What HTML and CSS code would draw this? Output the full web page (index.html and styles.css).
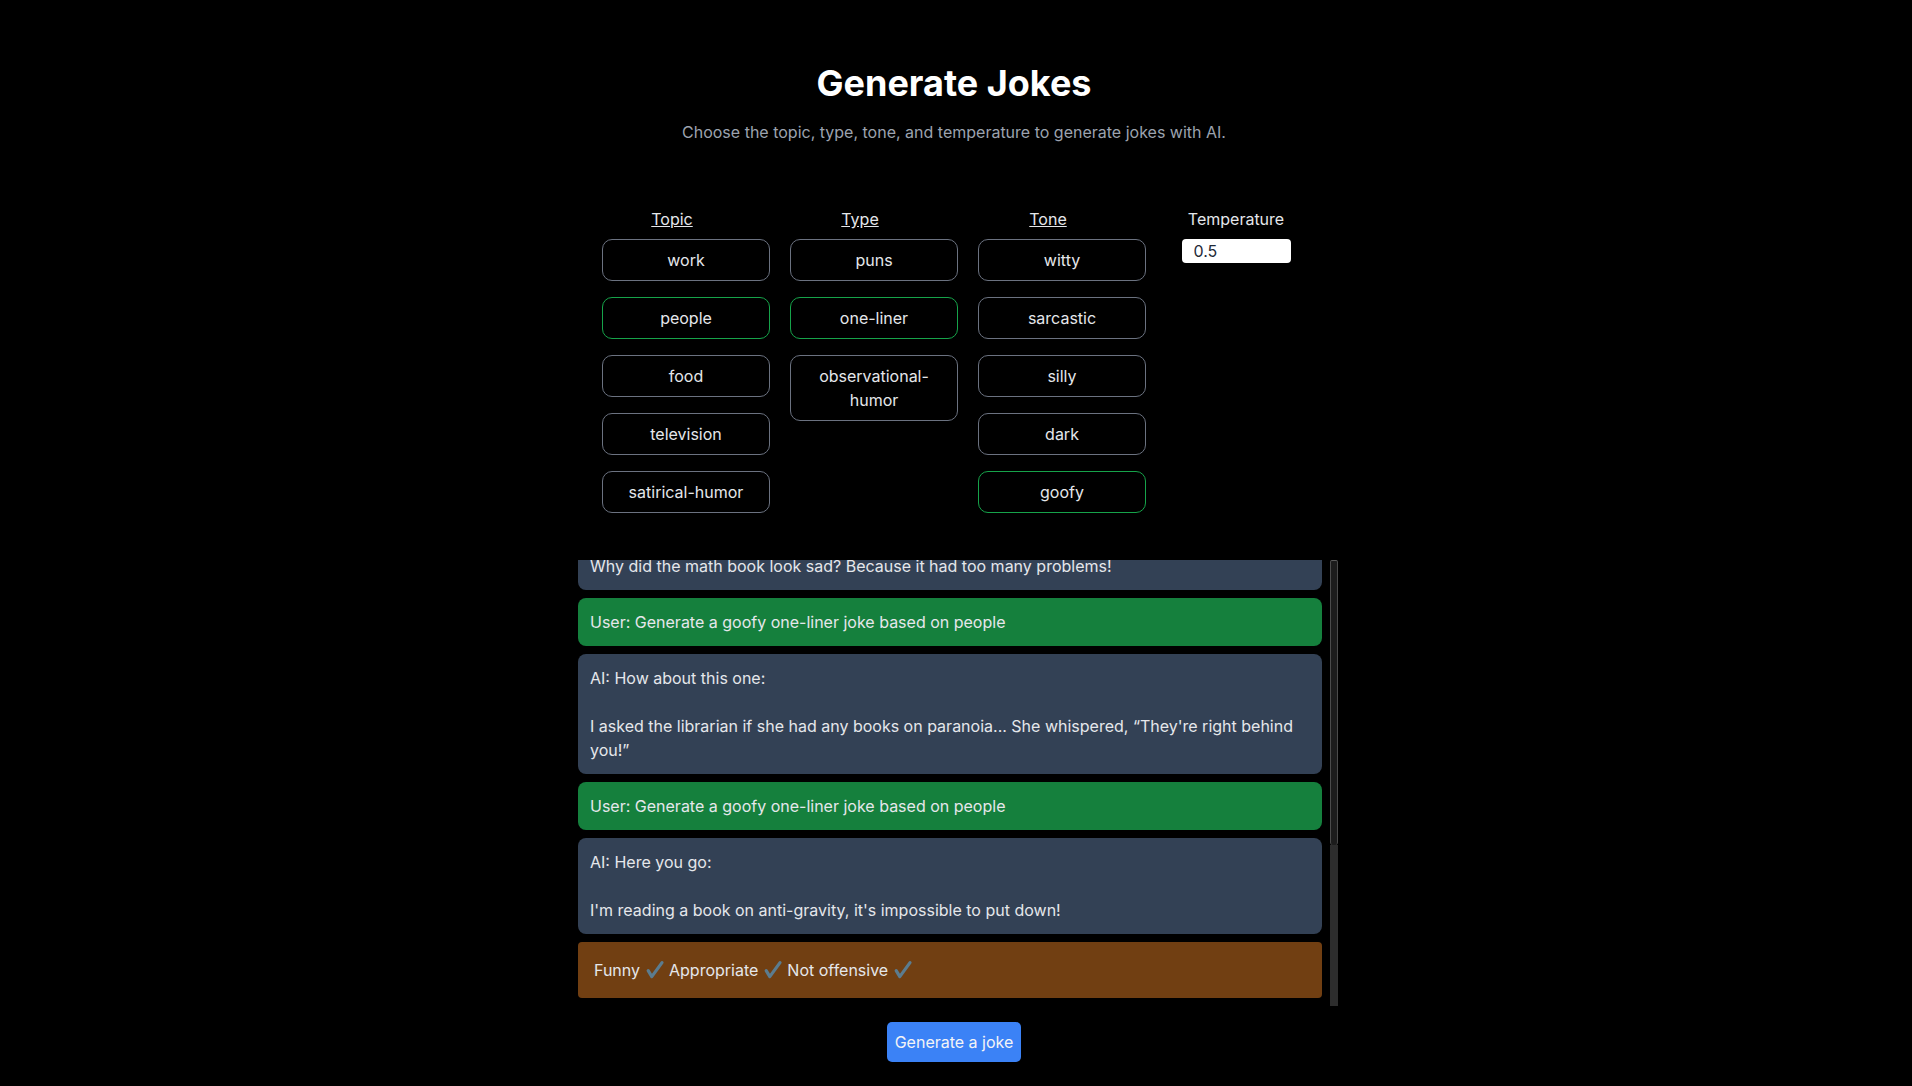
FILE: index.html
```html
<!DOCTYPE html>
<html lang="en">
<head>
<meta charset="utf-8">
<title>Generate Jokes</title>
<link rel="stylesheet" href="styles.css">
</head>
<body>
<main class="page">
  <h1 class="title">Generate Jokes</h1>
  <p class="subtitle">Choose the topic, type, tone, and temperature to generate jokes with AI.</p>

  <section class="options">
    <div class="col">
      <h2 class="col-head">Topic</h2>
      <div class="chips">
        <button class="chip">work</button>
        <button class="chip chip-on">people</button>
        <button class="chip">food</button>
        <button class="chip">television</button>
        <button class="chip">satirical-humor</button>
      </div>
    </div>
    <div class="col">
      <h2 class="col-head">Type</h2>
      <div class="chips">
        <button class="chip">puns</button>
        <button class="chip chip-on">one-liner</button>
        <button class="chip">observational-humor</button>
      </div>
    </div>
    <div class="col">
      <h2 class="col-head">Tone</h2>
      <div class="chips">
        <button class="chip">witty</button>
        <button class="chip">sarcastic</button>
        <button class="chip">silly</button>
        <button class="chip">dark</button>
        <button class="chip chip-on">goofy</button>
      </div>
    </div>
    <div class="col col-temp">
      <label class="temp-label" for="temp">Temperature</label>
      <input id="temp" class="temp-input" type="text" value="0.5">
    </div>
  </section>

  <div class="chat-wrap">
    <section class="chat">
      <div class="chat-inner">
        <div class="msg msg-user">User: Generate a witty puns joke based on work</div>
        <div class="msg msg-ai">AI: Here's one for you:&#10;&#10;I used to be a banker, but I lost interest.</div>
        <div class="msg msg-user">User: Generate a sarcastic observational-humor joke based on food</div>
        <div class="msg msg-ai">AI: Sure thing:&#10;&#10;I love how restaurants call it a "light salad" like it isn't going to cost me $18.</div>
        <div class="msg msg-user">User: Generate a silly puns joke based on television</div>
        <div class="msg msg-ai">AI: Here you go:&#10;&#10;My TV and I have a lot in common, we both spend the whole day on standby.</div>
        <div class="msg msg-user">User: Generate a dark one-liner joke based on work</div>
        <div class="msg msg-ai">AI: How about this:&#10;&#10;My boss told me to have a good day... so I went home.</div>
        <div class="msg msg-user">User: Generate a goofy puns joke based on people</div>
        <div class="msg msg-ai">AI: Sure!&#10;&#10;Why did the math book look sad? Because it had too many problems!</div>
        <div class="msg msg-user">User: Generate a goofy one-liner joke based on people</div>
        <div class="msg msg-ai">AI: How about this one:&#10;&#10;I asked the librarian if she had any books on paranoia... She whispered, “They're right behind you!”</div>
        <div class="msg msg-user">User: Generate a goofy one-liner joke based on people</div>
        <div class="msg msg-ai">AI: Here you go:&#10;&#10;I'm reading a book on anti-gravity, it's impossible to put down!</div>
        <div class="msg msg-eval">Funny <svg class="check" viewBox="0 0 20 20" aria-hidden="true"><path d="M3.2 10.6 L6.8 16.6 L17 2.6"/></svg> Appropriate <svg class="check" viewBox="0 0 20 20" aria-hidden="true"><path d="M3.2 10.6 L6.8 16.6 L17 2.6"/></svg> Not offensive <svg class="check" viewBox="0 0 20 20" aria-hidden="true"><path d="M3.2 10.6 L6.8 16.6 L17 2.6"/></svg></div>
      </div>
    </section>
    <div class="scrollbar" aria-hidden="true">
      <div class="scroll-track"></div>
      <div class="scroll-thumb"></div>
    </div>
  </div>

  <button class="generate">Generate a joke</button>
</main>
</body>
</html>
```

FILE: styles.css
```css
* {
  box-sizing: border-box;
}

html,
body {
  margin: 0;
  background: #000;
}

body {
  font-family: Inter, "Noto Sans", sans-serif;
  font-size: 16px;
  line-height: 24px;
  color: #e5e7eb;
}

.page {
  display: flex;
  flex-direction: column;
  align-items: center;
  padding-top: 63px;
  padding-right: 4px;
}

.title {
  margin: 0;
  font-size: 36px;
  line-height: 40px;
  font-weight: 700;
  color: #ffffff;
}

.subtitle {
  margin: 17px 0 0;
  color: #9ca3af;
}

.options {
  display: flex;
  align-items: flex-start;
  gap: 20px;
  margin-top: 63px;
}

.col {
  width: 168px;
  display: flex;
  flex-direction: column;
}

.col-head {
  margin: 0 0 8px;
  padding-right: 28px;
  font-size: 16px;
  line-height: 24px;
  font-weight: 400;
  text-align: center;
  text-decoration: underline;
  color: #e5e7eb;
}

.chips {
  display: flex;
  flex-direction: column;
  gap: 16px;
}

.chip {
  width: 168px;
  padding: 8px 16px;
  font: inherit;
  line-height: 24px;
  color: #e5e7eb;
  background: transparent;
  border: 1px solid #6b7280;
  border-radius: 10px;
  text-align: center;
}

.chip-on {
  border-color: #16a34a;
}

.col-temp {
  width: 140px;
  align-items: center;
}

.temp-label {
  margin-bottom: 8px;
  color: #e5e7eb;
}

.temp-input {
  width: 109px;
  height: 24px;
  padding: 0 12px;
  border: 0;
  border-radius: 4px;
  font: inherit;
  line-height: 24px;
  color: #1f2937;
  background: #ffffff;
}

.chat-wrap {
  display: flex;
  gap: 8px;
  height: 446px;
  margin-top: 47px;
  margin-left: 8px;
}

.chat {
  width: 744px;
  height: 100%;
  overflow-y: auto;
  scrollbar-width: none;
  display: flex;
  flex-direction: column-reverse;
}

.chat::-webkit-scrollbar {
  display: none;
}

.chat-inner {
  display: flex;
  flex-direction: column;
}

.scrollbar {
  width: 8px;
  height: 100%;
  display: flex;
  flex-direction: column;
}

.scroll-track {
  flex: 1;
  background: #1c1c1c;
  border-left: 1px solid #4b4b4b;
  border-right: 1px solid #4b4b4b;
  border-top: 1px solid #5a5a5a;
  border-radius: 2px 2px 3px 3px;
}

.scroll-thumb {
  height: 161px;
  background: #2d2d2d;
}

.msg {
  margin-bottom: 8px;
  padding: 12px;
  border-radius: 8px;
  white-space: pre-wrap;
  color: #e5e7eb;
}

.msg-user {
  background: #15803d;
}

.msg-ai {
  background: #334155;
}

.msg-eval {
  padding: 16px;
  border-radius: 4px;
  background: #713f12;
}

.check {
  width: 20px;
  height: 20px;
  vertical-align: -4px;
  fill: none;
  stroke: #5b7c8f;
  stroke-width: 3.2;
  stroke-linecap: round;
  stroke-linejoin: round;
}

.generate {
  margin-top: 16px;
  padding: 8px;
  font: inherit;
  line-height: 24px;
  color: #f3f4f6;
  background: #3b82f6;
  border: 0;
  border-radius: 5px;
}
```
